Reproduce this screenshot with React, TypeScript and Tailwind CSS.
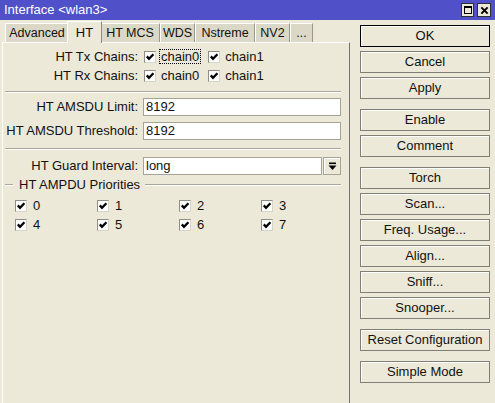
import React from 'react';

const font = "font-['Liberation_Sans',Arial,sans-serif]";

function CheckBox() {
  return (
    <span className="flex h-[12px] w-[12px] shrink-0 items-center justify-center border border-[#8f8d84] border-b-[#d8d5c8] border-r-[#d8d5c8] bg-white">
      <svg viewBox="0 0 10 10" className="h-[10px] w-[10px]">
        <polyline points="1.8,4.4 4,6.8 8.4,2.2" fill="none" stroke="#000" strokeWidth="2.3" />
      </svg>
    </span>
  );
}

const tabs = [
  { label: 'Advanced', w: 'w-[64px]' },
  { label: 'HT', w: 'w-[35px]', active: true },
  { label: 'HT MCS', w: 'w-[60px]' },
  { label: 'WDS', w: 'w-[35px]' },
  { label: 'Nstreme', w: 'w-[60px]' },
  { label: 'NV2', w: 'w-[35px]' },
  { label: '...', w: 'w-[23px]' },
];

const buttonGroups = [
  ['OK', 'Cancel', 'Apply'],
  ['Enable', 'Comment'],
  ['Torch', 'Scan...', 'Freq. Usage...', 'Align...', 'Sniff...', 'Snooper...'],
  ['Reset Configuration'],
  ['Simple Mode'],
];

function WinButton({ label }: { label: string }) {
  const isDefault = label === 'OK';
  return (
    <div
      className={`flex h-[22px] items-center justify-center border bg-[#ece9d8] text-[13px] text-[#111] shadow-[inset_1px_1px_0_#ffffff] ${
        isDefault ? 'border-black' : 'border-[#807e75]'
      }`}
    >
      {label}
    </div>
  );
}

function Separator() {
  return <div className="ml-[2px] w-[336px] border-t border-b border-t-[#aca899] border-b-white" />;
}

function InputRow({ label, value }: { label: string; value: string }) {
  return (
    <div className="flex h-[18px] items-center">
      <div className="w-[135px] text-right">{label}</div>
      <div className="ml-[5px] flex h-[18px] w-[198px] items-center border border-[#a7a496] bg-white pl-[2px]">
        {value}
      </div>
    </div>
  );
}

export default function App() {
  return (
    <div className={`${font} flex h-[403px] w-[495px] flex-col overflow-hidden bg-[#ece9d8] text-[13px] text-[#111]`}>
      {/* title bar */}
      <div className="flex h-[20px] shrink-0 items-center justify-between bg-[#5050c8] pl-[4px] pr-[4px] text-white">
        <span>Interface &lt;wlan3&gt;</span>
        <div className="flex gap-[3px]">
          <div className="flex h-[14px] w-[13px] items-center justify-center border border-[#303030] bg-[#ece9d8]">
            <div className="h-[8px] w-[8px] border border-t-2 border-black" />
          </div>
          <div className="flex h-[14px] w-[14px] items-center justify-center border border-[#303030] bg-[#ece9d8]">
            <svg viewBox="0 0 10 10" className="h-[9px] w-[9px]">
              <path d="M1.5 1.5 L8.5 8.5 M8.5 1.5 L1.5 8.5" stroke="#000" strokeWidth="2.2" />
            </svg>
          </div>
        </div>
      </div>

      <div className="flex flex-1">
        {/* tabbed panel */}
        <div className="flex w-[352px] flex-col">
          <div className="flex h-[22px] items-end pl-[5px] text-[12.5px]">
            {tabs.map((t) =>
              t.active ? (
                <div
                  key={t.label}
                  className={`relative top-[1px] z-10 -mx-[2px] flex h-[22px] items-center justify-center border-l border-r border-t border-l-white border-r-[#8d8a80] border-t-white bg-[#ece9d8] text-[13px] ${t.w}`}
                >
                  {t.label}
                </div>
              ) : (
                <div
                  key={t.label}
                  className={`flex h-[19px] items-center justify-center border-l border-r border-t border-l-white border-r-[#9a978b] border-t-white bg-[#dcd8c7] ${t.w}`}
                >
                  {t.label}
                </div>
              )
            )}
          </div>

          <div className="ml-[2px] flex w-[348px] flex-1 flex-col border-l border-r border-t border-l-white border-r-[#75736b] border-t-white pt-[4px]">
            <div className="flex h-[19px] items-center">
              <div className="w-[135px] text-right">HT Tx Chains:</div>
              <span className="ml-[6px]">
                <CheckBox />
              </span>
              <span className="ml-[3px] border border-dotted border-black px-[1px] leading-[13px]">chain0</span>
              <span className="ml-[7px]">
                <CheckBox />
              </span>
              <span className="ml-[5px]">chain1</span>
            </div>
            <div className="flex h-[19px] items-center">
              <div className="w-[135px] text-right">HT Rx Chains:</div>
              <span className="ml-[6px]">
                <CheckBox />
              </span>
              <span className="ml-[3px] border border-transparent px-[1px] leading-[13px]">chain0</span>
              <span className="ml-[7px]">
                <CheckBox />
              </span>
              <span className="ml-[5px]">chain1</span>
            </div>

            <div className="mt-[6px]">
              <Separator />
            </div>

            <div className="mt-[5px]">
              <InputRow label="HT AMSDU Limit:" value="8192" />
            </div>
            <div className="mt-[6px]">
              <InputRow label="HT AMSDU Threshold:" value="8192" />
            </div>

            <div className="mt-[8px]">
              <Separator />
            </div>

            <div className="mt-[7px] flex h-[18px] items-center">
              <div className="w-[135px] text-right">HT Guard Interval:</div>
              <div className="ml-[5px] flex h-[18px] w-[179px] items-center border border-[#a7a496] bg-white pl-[2px]">
                long
              </div>
              <div className="ml-[1px] flex h-[18px] w-[18px] items-center justify-center border border-[#a7a496] bg-[#ece9d8] shadow-[inset_1px_1px_0_#ffffff]">
                <svg viewBox="0 0 9 9" className="h-[9px] w-[9px]">
                  <rect x="1" y="0.5" width="7" height="1.6" fill="#000" />
                  <polygon points="0.5,3.5 8.5,3.5 4.5,8" fill="#000" />
                </svg>
              </div>
            </div>

            <div className="mt-[3px] flex h-[14px] w-[338px] items-center">
              <div className="ml-[2px] w-[8px] border-t border-b border-t-[#aca899] border-b-white" />
              <span className="ml-[6px]">HT AMPDU Priorities</span>
              <div className="ml-[5px] flex-1 border-t border-b border-t-[#aca899] border-b-white" />
            </div>

            <div className="mt-[4px] flex flex-col">
              {[
                ['0', '1', '2', '3'],
                ['4', '5', '6', '7'],
              ].map((row, i) => (
                <div key={i} className="flex h-[19px] items-center pl-[12px]">
                  {row.map((n) => (
                    <div key={n} className="flex w-[82px] items-center">
                      <CheckBox />
                      <span className="ml-[6px]">{n}</span>
                    </div>
                  ))}
                </div>
              ))}
            </div>
          </div>
        </div>

        {/* buttons */}
        <div className="ml-[8px] flex w-[130px] flex-col gap-[10px] pt-[5px]">
          {buttonGroups.map((g, i) => (
            <div key={i} className="flex flex-col gap-[4px]">
              {g.map((b) => (
                <WinButton key={b} label={b} />
              ))}
            </div>
          ))}
        </div>
      </div>
    </div>
  );
}
